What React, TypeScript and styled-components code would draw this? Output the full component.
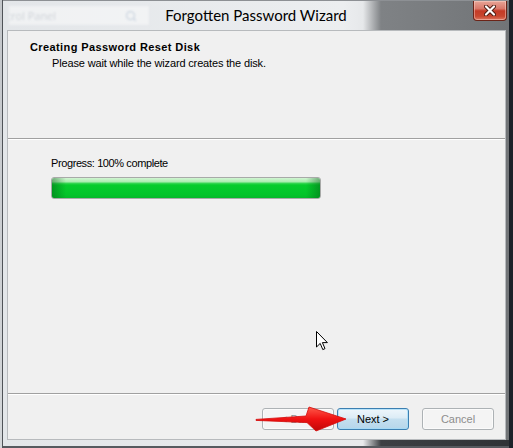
import React from 'react';
import styled, { createGlobalStyle } from 'styled-components';
import { Search } from 'lucide-react';

const Global = createGlobalStyle`
  html, body { margin: 0; padding: 0; background: #1d2229; }
  body { width: 513px; height: 448px; overflow: hidden; }
`;

const Screen = styled.div`
  position: relative;
  width: 513px;
  height: 448px;
  display: flex;
  background: #1d2229;
  overflow: hidden;
  font-family: "Liberation Sans", Arial, sans-serif;
`;

const BehindEdge = styled.div`
  width: 2px;
  background: linear-gradient(#c3c6ca, #d4d7da);
`;

const Window = styled.div`
  width: 506px;
  border-left: 1px solid #4f5358;
  display: flex;
  flex-direction: column;
  background: linear-gradient(to right, #e3e6e9 0, #eceef0 340px, #e6e8ea 360px, #7f8285 378px, #717477 100%);
`;

const TitleBar = styled.div`
  height: 29px;
  border-top: 1px solid #8d9094;
  display: grid;
  grid-template-columns: 1fr auto 1fr;
  align-items: start;
`;

const SearchBox = styled.div`
  margin: 4px 0 0 5px;
  width: 142px;
  height: 21px;
  box-sizing: border-box;
  border: 1px solid rgba(215, 219, 223, 0.5);
  background: rgba(255, 255, 255, 0.45);
  display: flex;
  align-items: center;
  justify-content: space-between;
  padding-right: 12px;
  overflow: hidden;
  filter: blur(0.8px);
`;

const SearchText = styled.span`
  font-family: "Open Sans", sans-serif;
  font-size: 11px;
  color: #cfd3d8;
  white-space: nowrap;
  margin-left: -60px;
`;

const Title = styled.div`
  padding-top: 3px;
  font-family: Lato, "Open Sans", sans-serif;
  font-size: 15px;
  line-height: 22px;
  color: #000;
  white-space: nowrap;
`;

const Controls = styled.div`
  display: flex;
  justify-content: flex-end;
`;

const CloseButton = styled.div`
  width: 34px;
  height: 20px;
  margin-right: 2px;
  box-sizing: border-box;
  border: 1px solid #6b2418;
  border-top: none;
  border-radius: 0 0 4px 4px;
  background: linear-gradient(#e7a597 0, #d9786a 40%, #c43a26 52%, #c8472f 80%, #dd7660 100%);
  box-shadow: inset 0 0 0 1px rgba(255, 220, 210, 0.45);
  display: flex;
  align-items: center;
  justify-content: center;
`;

const Middle = styled.div`
  flex: 1;
  display: flex;
  padding: 0 3px 0 4px;
`;

const Client = styled.div`
  flex: 1;
  border: 1px solid #b7babd;
  background: #f0f0f0;
  display: flex;
  flex-direction: column;
`;

const BottomFrame = styled.div`
  height: 8px;
  box-sizing: border-box;
  border-bottom: 2px solid #565a5f;
  background: linear-gradient(to right, #e3e6e9 0, #e8eaec 360px, #3d4044 378px, #2f3236 100%);
`;

const RightEdge = styled.div`
  width: 4px;
  background: #1d2229;
`;

const Header = styled.div`
  height: 107px;
  box-sizing: border-box;
  padding: 10px 0 0 22px;
`;

const HeaderTitle = styled.div`
  font-size: 11px;
  line-height: 13px;
  font-weight: bold;
  letter-spacing: 0.4px;
  color: #000;
`;

const HeaderSub = styled.div`
  margin: 3px 0 0 22px;
  font-size: 11px;
  line-height: 13px;
  letter-spacing: -0.15px;
  color: #000;
`;

const Separator = styled.div`
  border-top: 1px solid #a0a0a0;
  border-bottom: 1px solid #ffffff;
`;

const Body = styled.div`
  flex: 1;
  padding: 17px 0 0 43px;
`;

const Label = styled.div`
  font-size: 11px;
  line-height: 13px;
  letter-spacing: -0.4px;
  color: #000;
`;

const ProgressTrack = styled.div`
  margin-top: 7px;
  width: 270px;
  height: 22px;
  box-sizing: border-box;
  border: 1px solid #a8aaa8;
  border-radius: 3px;
  background: #e6e6e6;
  overflow: hidden;
`;

const ProgressFill = styled.div`
  height: 100%;
  background:
    linear-gradient(to right, rgba(0, 90, 20, 0.45) 0, rgba(0, 90, 20, 0) 14px, rgba(0, 90, 20, 0) calc(100% - 14px), rgba(0, 90, 20, 0.45) 100%),
    linear-gradient(to bottom, #d2f5d3 0, #a9ecae 4px, #3fd85a 5px, #06cc2c 7px, #03c42a 85%, #06b82a 100%);
`;

const Footer = styled.div`
  height: 44px;
  box-sizing: border-box;
  padding: 13px 11px 0 0;
  display: flex;
  justify-content: flex-end;
`;

const Button = styled.div<{ $primary?: boolean; $disabled?: boolean; $gap: number }>`
  width: 72px;
  height: 22px;
  margin-left: ${p => p.$gap}px;
  box-sizing: border-box;
  border-radius: 3px;
  border: 1px solid ${p => (p.$primary ? '#3c7fb1' : '#adb2b5')};
  background: ${p =>
    p.$primary
      ? 'linear-gradient(#eef6fb 0, #dcecf6 45%, #c4dfef 50%, #b6d6ea 100%)'
      : '#f4f4f4'};
  box-shadow: ${p => (p.$primary ? 'inset 0 0 0 1px rgba(160, 220, 250, 0.7)' : 'inset 0 0 0 1px #fbfbfb')};
  color: ${p => (p.$disabled ? '#8d8d8d' : '#000')};
  font-size: 11px;
  display: flex;
  align-items: center;
  justify-content: center;
`;

const ArrowMark = styled.svg`
  position: absolute;
  left: 254px;
  top: 402px;
`;

const Pointer = styled.svg`
  position: absolute;
  left: 315px;
  top: 330px;
`;

export default function App() {
  const progress = 100;
  return (
    <>
      <Global />
      <Screen>
        <BehindEdge />
        <Window>
          <TitleBar>
            <SearchBox>
              <SearchText>Search Control Panel</SearchText>
              <Search size={12} color="#c9d3de" strokeWidth={2.5} />
            </SearchBox>
            <Title>Forgotten Password Wizard</Title>
            <Controls>
              <CloseButton>
                <svg width="12" height="11" viewBox="0 0 12 11">
                  <path d="M2 1.5 L10 9.5 M10 1.5 L2 9.5" stroke="#4a1a10" strokeWidth="4" strokeLinecap="round" />
                  <path d="M2 1.5 L10 9.5 M10 1.5 L2 9.5" stroke="#ffffff" strokeWidth="2.2" strokeLinecap="round" />
                </svg>
              </CloseButton>
            </Controls>
          </TitleBar>
          <Middle>
            <Client>
              <Header>
                <HeaderTitle>Creating Password Reset Disk</HeaderTitle>
                <HeaderSub>Please wait while the wizard creates the disk.</HeaderSub>
              </Header>
              <Separator />
              <Body>
                <Label>Progress: {progress}% complete</Label>
                <ProgressTrack>
                  <ProgressFill style={{ width: `${progress}%` }} />
                </ProgressTrack>
              </Body>
              <Separator />
              <Footer>
                <Button $disabled $gap={0}>&lt; Back</Button>
                <Button $primary $gap={3}>Next &gt;</Button>
                <Button $disabled $gap={13}>Cancel</Button>
              </Footer>
            </Client>
          </Middle>
          <BottomFrame />
        </Window>
        <RightEdge />
        <ArrowMark width="96" height="32" viewBox="0 0 96 32">
          <defs>
            <linearGradient id="ar" x1="0" y1="0" x2="0" y2="1">
              <stop offset="0" stopColor="#ff5a4a" />
              <stop offset="0.5" stopColor="#f01212" />
              <stop offset="1" stopColor="#c00808" />
            </linearGradient>
          </defs>
          <path d="M2 17.4 L52 14 L55 5 L92 17 L62 29 L53 20.6 L2 18.4 Z" fill="url(#ar)" stroke="#d40a0a" strokeWidth="0.8" strokeLinejoin="round" />
        </ArrowMark>
        <Pointer width="14" height="22" viewBox="0 0 14 22">
          <path d="M1.5 1.5 L1.5 17 L5.2 13.4 L7.8 19.6 L10 18.6 L7.4 12.6 L12.4 12.6 Z" fill="#ffffff" stroke="#000" strokeWidth="1" strokeLinejoin="round" />
        </Pointer>
      </Screen>
    </>
  );
}
